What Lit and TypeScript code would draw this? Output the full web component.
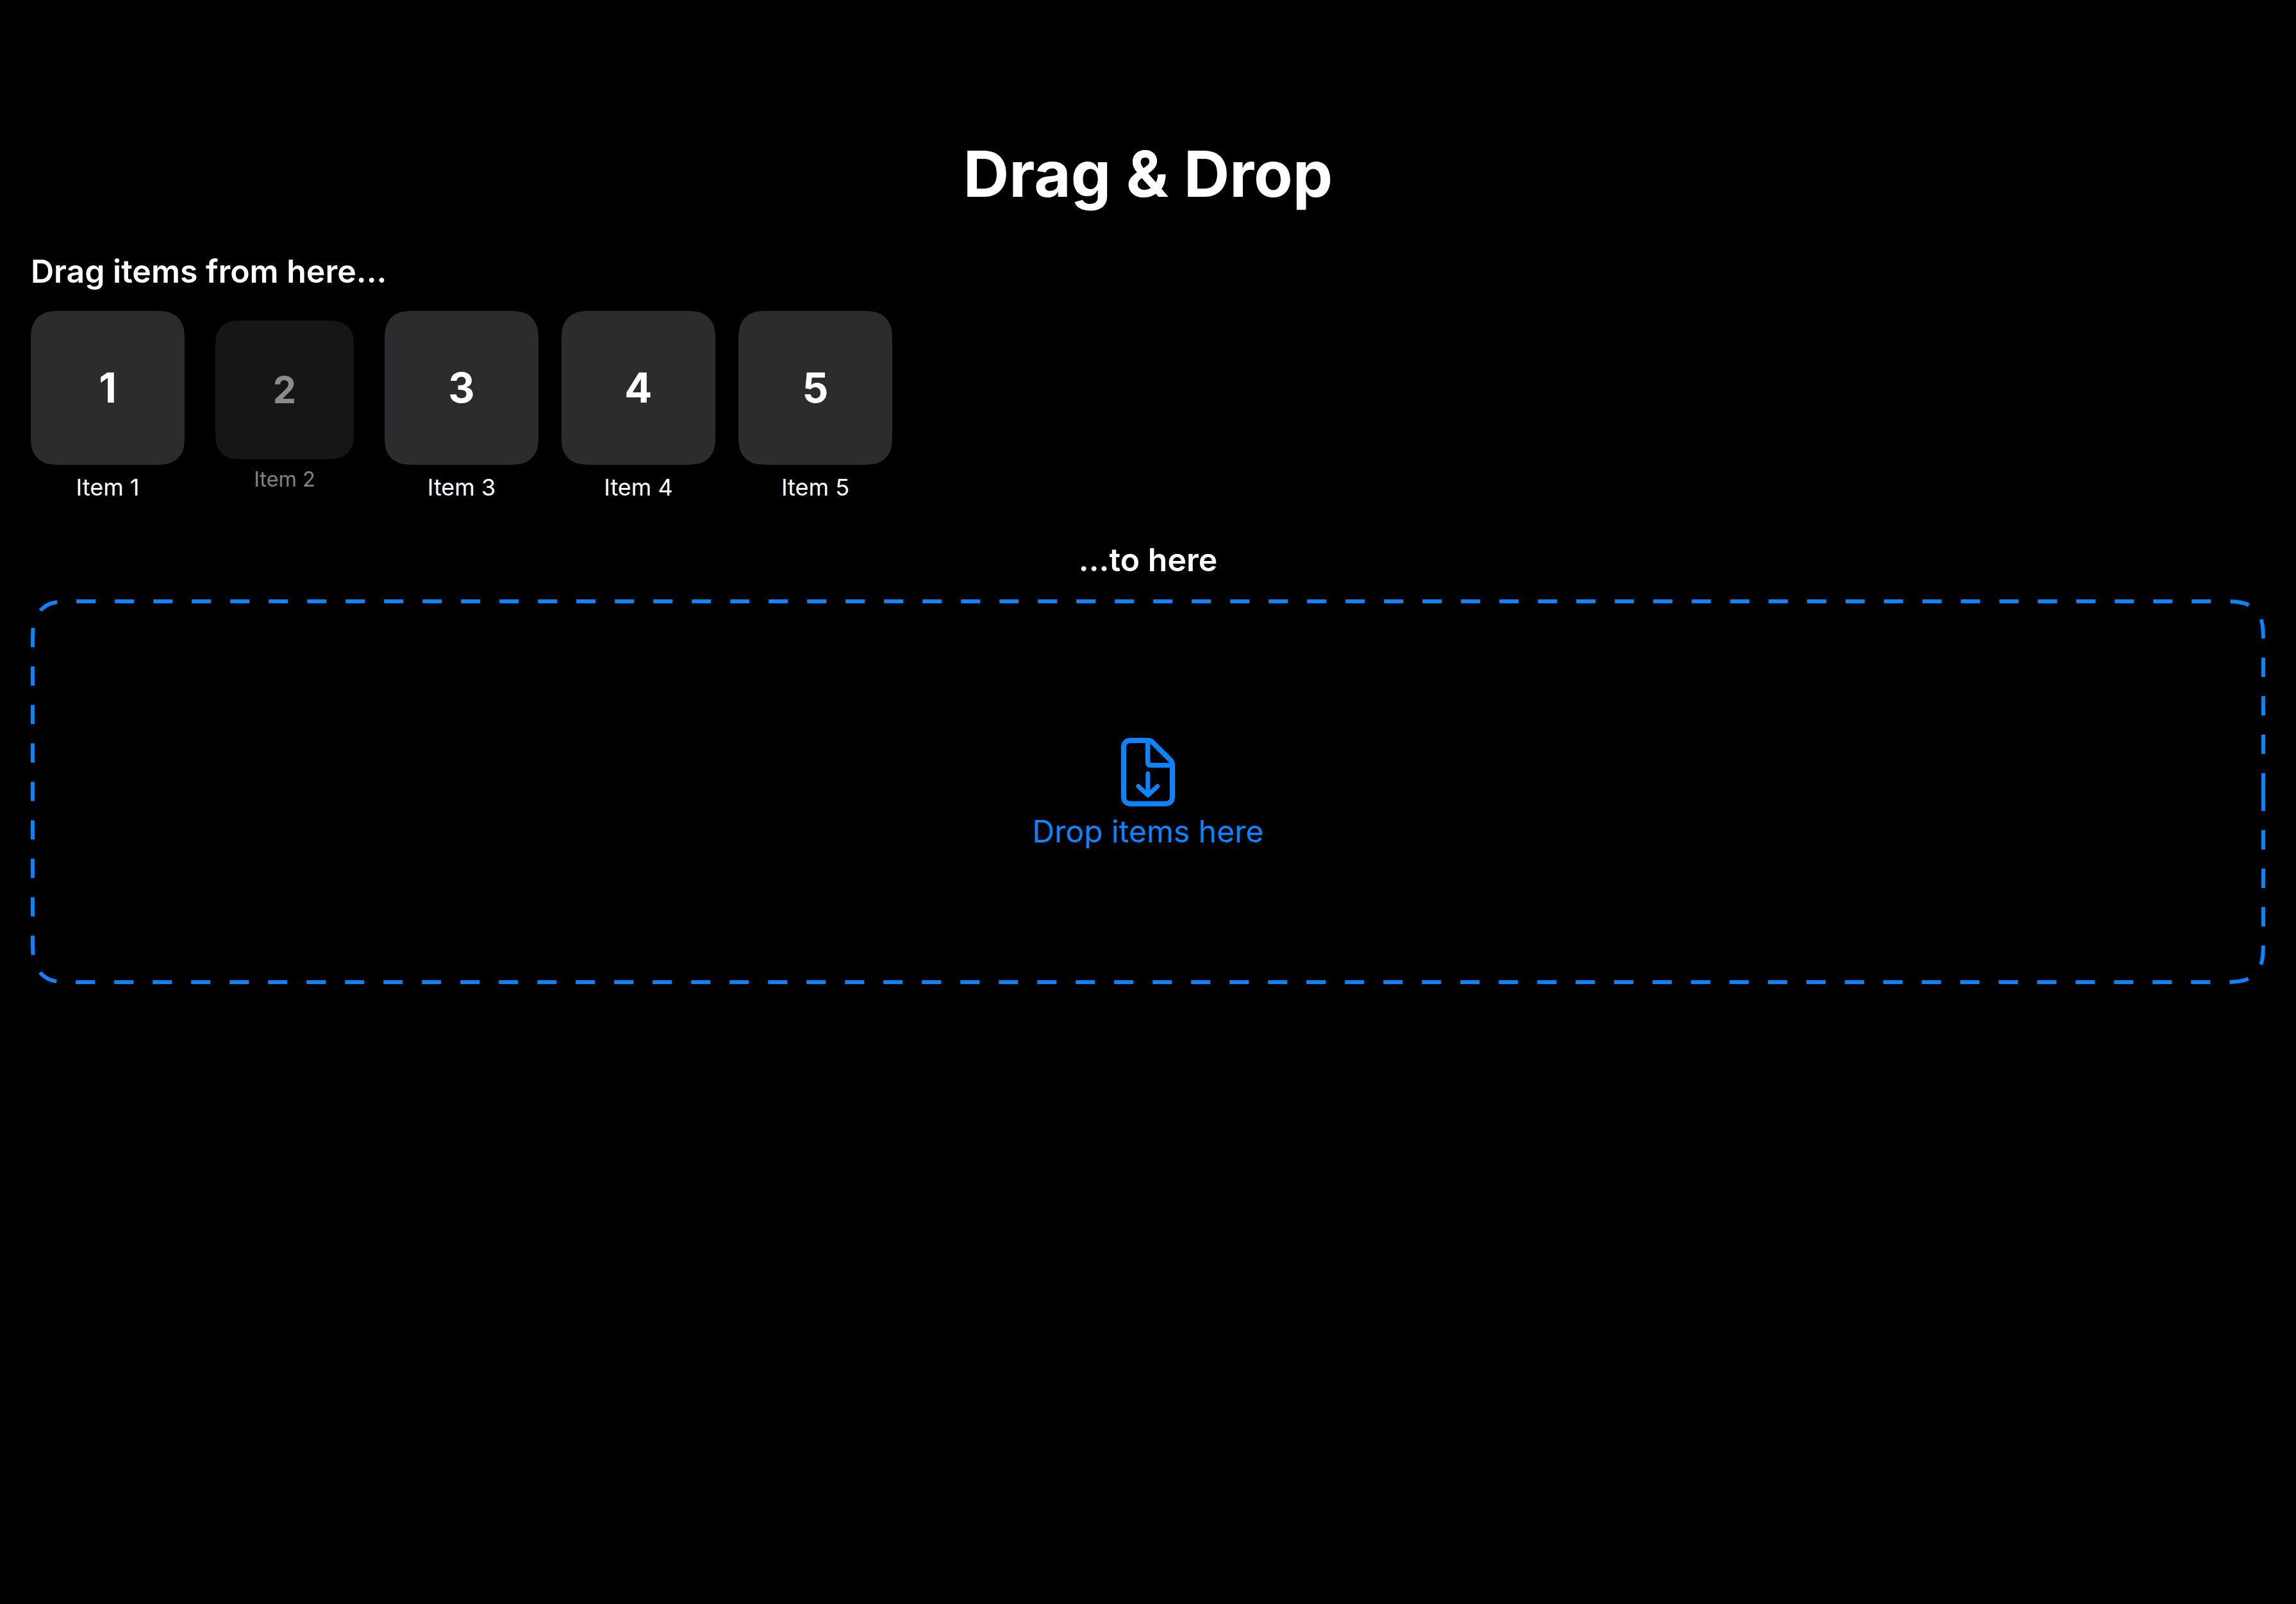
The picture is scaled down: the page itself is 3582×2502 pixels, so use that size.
import { LitElement, html, css, svg } from "lit";
import { customElement, property, state } from "lit/decorators.js";
import { classMap } from "lit/directives/class-map.js";

/**
 * Path of a rectangle with continuous (superelliptical) corners,
 * drawn clockwise from the middle of its right edge.
 */
function continuousRect(x: number, y: number, w: number, h: number, r: number): string {
  const r0 = x + w;
  const b0 = y + h;
  const a = 1.528665 * r;
  const b = 1.088493 * r;
  const c = 0.868407 * r;
  const d = 0.631494 * r;
  const e = 0.372824 * r;
  const f = 0.16906 * r;
  const g = 0.074911 * r;
  return [
    `M${r0} ${y + h / 2}`,
    `V${b0 - a}`,
    `C${r0} ${b0 - b} ${r0} ${b0 - c} ${r0 - g} ${b0 - d}`,
    `C${r0 - f} ${b0 - e} ${r0 - e} ${b0 - f} ${r0 - d} ${b0 - g}`,
    `C${r0 - c} ${b0} ${r0 - b} ${b0} ${r0 - a} ${b0}`,
    `H${x + a}`,
    `C${x + b} ${b0} ${x + c} ${b0} ${x + d} ${b0 - g}`,
    `C${x + e} ${b0 - f} ${x + f} ${b0 - e} ${x + g} ${b0 - d}`,
    `C${x} ${b0 - c} ${x} ${b0 - b} ${x} ${b0 - a}`,
    `V${y + a}`,
    `C${x} ${y + b} ${x} ${y + c} ${x + g} ${y + d}`,
    `C${x + f} ${y + e} ${x + e} ${y + f} ${x + d} ${y + g}`,
    `C${x + c} ${y} ${x + b} ${y} ${x + a} ${y}`,
    `H${r0 - a}`,
    `C${r0 - b} ${y} ${r0 - c} ${y} ${r0 - d} ${y + g}`,
    `C${r0 - e} ${y + f} ${r0 - f} ${y + e} ${r0 - g} ${y + d}`,
    `C${r0} ${y + c} ${r0} ${y + b} ${r0} ${y + a}`,
    "Z",
  ].join("");
}

const CARD_SHAPE = continuousRect(0, 0, 240, 240, 36);

@customElement("drag-item")
class DragItem extends LitElement {
  @property({ type: Number }) number = 0;
  @property({ type: Boolean }) dragging = false;

  static styles = css`
    :host {
      display: block;
    }
    .item {
      display: flex;
      flex-direction: column;
      align-items: center;
      gap: 12px;
      padding: 0 0 2px;
      border: 0;
      background: none;
      color: #fff;
      font-family: inherit;
      cursor: grab;
    }
    .card {
      display: grid;
      place-items: center;
      width: 240px;
      height: 240px;
    }
    .shape,
    .number {
      grid-area: 1 / 1;
    }
    .shape {
      width: 240px;
      height: 240px;
      fill: #2c2c2e;
    }
    .number {
      z-index: 1;
      font-size: 64px;
      line-height: 80px;
      font-weight: 700;
    }
    .label {
      font-size: 36px;
      line-height: 46px;
      font-weight: 400;
    }
    .dragging {
      transform: scale(0.9);
    }
    .dragging .shape,
    .dragging .number,
    .dragging .label {
      opacity: 0.5;
    }
  `;

  render() {
    return html`
      <button
        type="button"
        draggable="true"
        class=${classMap({ item: true, dragging: this.dragging })}
      >
        <span class="card">
          <svg class="shape" viewBox="0 0 240 240" aria-hidden="true">
            <path d=${CARD_SHAPE}></path>
          </svg>
          <span class="number">${this.number}</span>
        </span>
        <span class="label">Item ${this.number}</span>
      </button>
    `;
  }
}

@customElement("drop-zone")
class DropZone extends LitElement {
  @state() private width = 0;
  @state() private height = 0;
  private observer?: ResizeObserver;

  static styles = css`
    :host {
      display: block;
    }
    .zone {
      display: grid;
      min-height: 600px;
      color: #0a84ff;
    }
    .outline {
      grid-area: 1 / 1;
      width: 100%;
      height: 100%;
      min-width: 0;
      fill: none;
      stroke: currentColor;
      stroke-width: 6;
      stroke-dasharray: 30 30;
    }
    .content {
      grid-area: 1 / 1;
      display: flex;
      flex-direction: column;
      align-items: center;
      justify-content: center;
      gap: 8px;
    }
    .icon {
      width: 84px;
      height: 116px;
      fill: none;
      stroke: currentColor;
      stroke-linecap: round;
      stroke-linejoin: round;
    }
    .hint {
      margin: 0;
      font-size: 48px;
      line-height: 60px;
      font-weight: 400;
    }
  `;

  connectedCallback() {
    super.connectedCallback();
    this.observer = new ResizeObserver(() => this.measure());
    this.observer.observe(this);
  }

  disconnectedCallback() {
    this.observer?.disconnect();
    super.disconnectedCallback();
  }

  firstUpdated() {
    this.measure();
  }

  private measure() {
    const box = this.getBoundingClientRect();
    this.width = box.width;
    this.height = box.height;
  }

  render() {
    const { width: w, height: h } = this;
    return html`
      <div class="zone">
        <svg class="outline" aria-hidden="true">
          ${w > 6 && h > 6
            ? svg`<path d=${continuousRect(3, 3, w - 6, h - 6, 45)}></path>`
            : null}
        </svg>
        <div class="content">
          <svg class="icon" viewBox="0 -8 84 116" aria-hidden="true">
            <path
              stroke-width="8"
              d="M14 4H42.5C45.5 4 47.6 5.3 49.6 7.3L76.7 34.4C79 36.7 80 38.8 80 42V92C80 98.6 76 102.7 69.5 102.7H14.5C8 102.7 4 98.6 4 92V15C4 8.4 8 4 14 4Z"
            ></path>
            <path stroke-width="7.4" d="M41.7 5V38.5Q41.7 42.7 45.9 42.7H79"></path>
            <path stroke-width="7" d="M41.8 55.8V88.5M27 75.5L41.8 89.3L56.8 75.5"></path>
          </svg>
          <p class="hint">Drop items here</p>
        </div>
      </div>
    `;
  }
}

@customElement("app-root")
class AppRoot extends LitElement {
  @property({ attribute: false }) items = [1, 2, 3, 4, 5];
  @state() private draggedItem = 2;

  static styles = css`
    :host {
      display: block;
      min-height: 100vh;
      box-sizing: border-box;
      background: #000;
      color: #fff;
      font-family: Inter, "Liberation Sans", sans-serif;
    }
    .page {
      display: flex;
      flex-direction: column;
      gap: 58px;
      padding: 207px 48px 48px;
    }
    .title {
      margin: 0;
      font-size: 99px;
      line-height: 128px;
      font-weight: 700;
      text-align: center;
    }
    .section {
      display: flex;
      flex-direction: column;
      gap: 32px;
    }
    .heading {
      margin: 0;
      font-size: 50px;
      line-height: 60px;
      font-weight: 600;
    }
    .centered {
      text-align: center;
    }
    .items {
      display: flex;
      flex-wrap: wrap;
      gap: 36px;
      margin: 0;
      padding: 0;
      list-style: none;
    }
  `;

  render() {
    return html`
      <main class="page">
        <h1 class="title">Drag &amp; Drop</h1>
        <section class="section">
          <h2 class="heading">Drag items from here...</h2>
          <ul class="items">
            ${this.items.map(
              (n) => html`<li>
                <drag-item .number=${n} .dragging=${n === this.draggedItem}></drag-item>
              </li>`,
            )}
          </ul>
        </section>
        <section class="section">
          <h2 class="heading centered">...to here</h2>
          <drop-zone></drop-zone>
        </section>
      </main>
    `;
  }
}
